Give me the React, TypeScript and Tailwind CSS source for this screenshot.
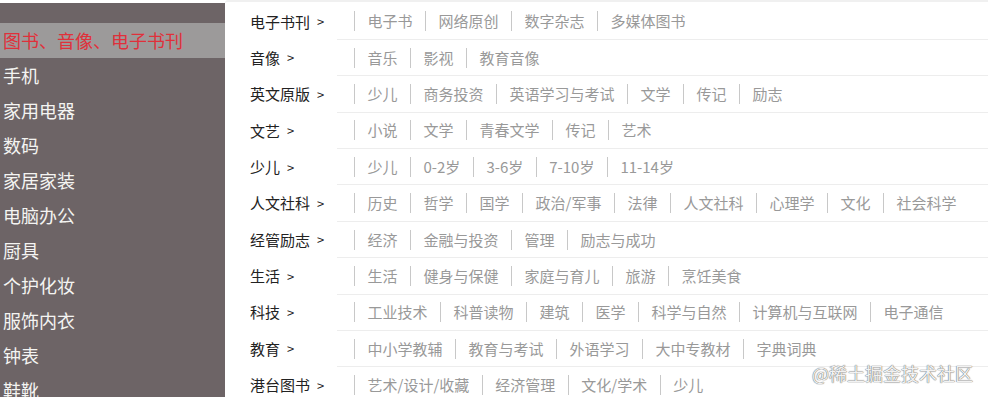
const sideItems = [
  "图书、音像、电子书刊",
  "手机",
  "家用电器",
  "数码",
  "家居家装",
  "电脑办公",
  "厨具",
  "个护化妆",
  "服饰内衣",
  "钟表",
  "鞋靴",
];

const groups: { title: string; items: string[] }[] = [
  { title: "电子书刊", items: ["电子书", "网络原创", "数字杂志", "多媒体图书"] },
  { title: "音像", items: ["音乐", "影视", "教育音像"] },
  { title: "英文原版", items: ["少儿", "商务投资", "英语学习与考试", "文学", "传记", "励志"] },
  { title: "文艺", items: ["小说", "文学", "青春文学", "传记", "艺术"] },
  { title: "少儿", items: ["少儿", "0-2岁", "3-6岁", "7-10岁", "11-14岁"] },
  {
    title: "人文社科",
    items: ["历史", "哲学", "国学", "政治/军事", "法律", "人文社科", "心理学", "文化", "社会科学"],
  },
  { title: "经管励志", items: ["经济", "金融与投资", "管理", "励志与成功"] },
  { title: "生活", items: ["生活", "健身与保健", "家庭与育儿", "旅游", "烹饪美食"] },
  {
    title: "科技",
    items: ["工业技术", "科普读物", "建筑", "医学", "科学与自然", "计算机与互联网", "电子通信"],
  },
  { title: "教育", items: ["中小学教辅", "教育与考试", "外语学习", "大中专教材", "字典词典"] },
  { title: "港台图书", items: ["艺术/设计/收藏", "经济管理", "文化/学术", "少儿"] },
];

const font = "font-['Microsoft_YaHei','Noto_Sans_CJK_SC',sans-serif]";

export default function App() {
  return (
    <div className={`relative flex h-[397px] w-[988px] overflow-hidden bg-white ${font}`}>
      {/* left category menu */}
      <div className="mt-[3px] w-[225px] shrink-0 bg-[#6d6466] pt-[20px]">
        {sideItems.map((name, i) => (
          <div
            key={name}
            className={`flex h-[35px] items-center pl-[3px] text-[18px] ${
              i === 0 ? "bg-[#9c9a9a] text-[#e0303a]" : "text-[#f4f4f2]"
            }`}
          >
            {name}
          </div>
        ))}
      </div>

      {/* right sub menu */}
      <div className="flex-1 rounded-tl-[3px] border-t-2 border-[#f0f0f0] pt-[1.7px]">
        {groups.map((g) => (
          <div key={g.title} className="flex h-[36.37px] pl-[25px]">
            <div className="flex w-[87px] shrink-0 items-center text-[15px] text-[#222]">
              {g.title}
              <span className="ml-[7px] text-[13px]">&gt;</span>
            </div>
            <div className="flex flex-1 items-center border-b border-[#ededed] pl-[17px] text-[15px] text-[#999]">
              {g.items.map((it, j) => (
                <span
                  key={j}
                  className="whitespace-nowrap border-l border-[#c8c8c8] pl-[12.5px] pr-[12.5px] leading-[20px]"
                >
                  {it}
                </span>
              ))}
            </div>
          </div>
        ))}
      </div>

      <div className="absolute left-[812px] top-[359px] whitespace-nowrap text-[18px] leading-[28px] text-[#f2f2f2] [text-shadow:0_0_1px_#666,0_0_1px_#666]">
        @稀土掘金技术社区
      </div>
    </div>
  );
}
